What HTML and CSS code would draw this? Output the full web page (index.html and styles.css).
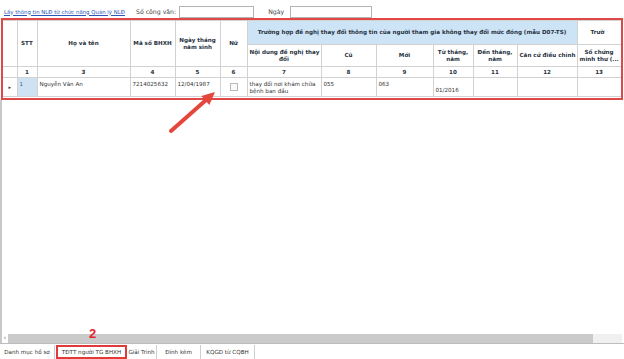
FILE: index.html
```html
<!DOCTYPE html>
<html lang="vi">
<head>
  <meta charset="UTF-8">
  <meta name="viewport" content="width=device-width, initial-scale=1.0">
  <title>TĐTT người TG BHXH</title>
  <link rel="stylesheet" href="styles.css">
</head>
<body>
  <div class="screen">
    <div class="toolbar">
      <a href="#" class="fetch-link">Lấy thông tin NLĐ từ chức năng Quản lý NLĐ</a>
      <label class="field-label" for="so-cv">Số công văn:</label>
      <input type="text" id="so-cv" class="field field-cv">
      <label class="field-label label-ngay" for="ngay">Ngày</label>
      <input type="text" id="ngay" class="field field-date">
    </div>

    <div class="grid-box">
      <table class="grid">
        <colgroup>
          <col style="width:14px"><col style="width:20px"><col style="width:93px">
          <col style="width:45px"><col style="width:45px"><col style="width:27px">
          <col style="width:74px"><col style="width:55px"><col style="width:57px">
          <col style="width:40px"><col style="width:44px"><col style="width:60px">
          <col style="width:44px">
        </colgroup>
        <thead>
          <tr class="head-1">
            <th rowspan="2"></th>
            <th rowspan="2">STT</th>
            <th rowspan="2">Họ và tên</th>
            <th rowspan="2">Mã số BHXH</th>
            <th rowspan="2">Ngày tháng<br>năm sinh</th>
            <th rowspan="2">Nữ</th>
            <th colspan="6" class="group">Trường hợp đề nghị thay đổi thông tin của người tham gia không thay đổi mức đóng (mẫu D07-TS)</th>
            <th class="group-next">Trườ</th>
          </tr>
          <tr class="head-2">
            <th>Nội dung đề nghị thay<br>đổi</th>
            <th>Cũ</th>
            <th>Mới</th>
            <th>Từ tháng,<br>năm</th>
            <th>Đến tháng,<br>năm</th>
            <th>Căn cứ điều chỉnh</th>
            <th>Số chứng<br>minh thư (...</th>
          </tr>
          <tr class="head-num">
            <th></th><th>1</th><th>3</th><th>4</th><th>5</th><th>6</th><th>7</th>
            <th>8</th><th>9</th><th>10</th><th>11</th><th>12</th><th>13</th>
          </tr>
        </thead>
        <tbody>
          <tr class="row">
            <td class="row-mark">&#9656;</td>
            <td class="stt">1</td>
            <td>Nguyễn Văn An</td>
            <td>7214025632</td>
            <td>12/04/1987</td>
            <td class="check-cell"><span class="check"></span></td>
            <td>thay đổi nơi khám chữa<br>bệnh ban đầu</td>
            <td>055</td>
            <td>063</td>
            <td class="low">01/2016</td>
            <td></td>
            <td></td>
            <td></td>
          </tr>
        </tbody>
      </table>
    </div>

    <div class="grid-empty"></div>

    <div class="hscroll">
      <span class="scroll-left">&#8249;</span>
      <div class="track"><div class="thumb"></div></div>
    </div>

    <div class="tabs">
      <span class="tab" style="width:55px">Danh mục hồ sơ</span>
      <span class="tab active" style="width:71px">TĐTT người TG BHXH</span>
      <span class="tab" style="width:30px">Giải Trình</span>
      <span class="tab" style="width:44px">Đính kèm</span>
      <span class="tab" style="width:54px">KQGD từ CQBH</span>
    </div>

    <svg class="callout-arrow" width="56" height="50" viewBox="0 0 56 50">
      <line x1="6" y1="43" x2="41" y2="12" stroke="#e4463c" stroke-width="4" stroke-linecap="round"/>
      <polygon points="50,4 44.3,17.1 36.3,8.1" fill="#e4463c"/>
    </svg>
    <span class="callout-num">2</span>
  </div>
</body>
</html>
```

FILE: styles.css
```css
* {
  box-sizing: border-box;
}
body {
  margin: 0;
  font-family: "DejaVu Sans", Verdana, sans-serif;
  font-size: 5.6px;
  color: #222;
  background: #fff;
}
.screen {
  position: relative;
  width: 624px;
  height: 359px;
  display: flex;
  flex-direction: column;
  overflow: hidden;
}
.toolbar {
  height: 18px;
  padding-top: 5px;
  display: flex;
  align-items: center;
}
.fetch-link {
  margin-left: 4px;
  font-size: 5.4px;
  color: #2a57b8;
  text-decoration: underline;
}
.field-label {
  margin-left: 11px;
  margin-right: 3px;
  font-size: 6.2px;
  color: #444;
}
.label-ngay {
  margin-left: 14px;
  margin-right: 6px;
}
.field {
  height: 12px;
  border: 1px solid #b4b4b4;
  background: #fff;
  padding: 0;
}
.field-cv {
  width: 75px;
}
.field-date {
  width: 82px;
}
.grid-box {
  margin-left: 1px;
  width: 622px;
  height: 82px;
  border: 2px solid #e04848;
  overflow: hidden;
}
.grid {
  table-layout: fixed;
  border-collapse: collapse;
  width: 618px;
}
.grid th,
.grid td {
  border: 1px solid #d2d2d2;
  padding: 0 2px;
  overflow: hidden;
  white-space: nowrap;
  line-height: 7px;
}
.grid tr > :first-child {
  border-left: 0;
}
.grid th {
  font-weight: bold;
  text-align: center;
  vertical-align: middle;
  background: #fff;
  color: #27323e;
}
.grid .group {
  background: #cde3f6;
}
.grid .group-next {
  text-align: left;
  padding-left: 13px;
}
.head-1 {
  height: 24px;
}
.head-2 {
  height: 22px;
}
.head-num {
  height: 11px;
}
.row {
  height: 19px;
}
.row td {
  vertical-align: top;
  padding-top: 3px;
  color: #333;
}
.row .row-mark {
  font-size: 5px;
  text-align: center;
  padding-top: 6px;
}
.row .stt {
  background: #cfe2f3;
  color: #3a5f8a;
}
.row .check-cell {
  text-align: center;
  padding-top: 5px;
}
.check {
  display: inline-block;
  width: 8px;
  height: 8px;
  border: 1px solid #b9b9b9;
  background: #fafafa;
}
.row .low {
  padding-top: 9px;
}
.grid-empty {
  flex: 1;
  border-left: 2px solid #c8c8c8;
}
.hscroll {
  height: 10px;
  display: flex;
  align-items: center;
  border-left: 2px solid #c8c8c8;
}
.scroll-left {
  width: 6px;
  font-size: 7px;
  color: #777;
  text-align: center;
}
.track {
  flex: 1;
  height: 9px;
  background: #f0f0f0;
  margin-right: 2px;
}
.thumb {
  width: 585px;
  height: 100%;
  background: #cacaca;
}
.tabs {
  height: 16px;
  display: flex;
  align-items: stretch;
  border-top: 1px solid #bdbdbd;
  padding-top: 1px;
}
.tab {
  display: flex;
  align-items: center;
  justify-content: center;
  border-right: 1px solid #cfcfcf;
  color: #333;
  white-space: nowrap;
}
.tab.active {
  margin-left: 1px;
  border: 2px solid #e03a3a;
}
.callout-arrow {
  position: absolute;
  left: 165px;
  top: 88px;
}
.callout-num {
  position: absolute;
  left: 89px;
  top: 326px;
  font-family: "Liberation Sans", Arial, sans-serif;
  font-weight: bold;
  font-size: 13px;
  color: #e0262a;
}
```
